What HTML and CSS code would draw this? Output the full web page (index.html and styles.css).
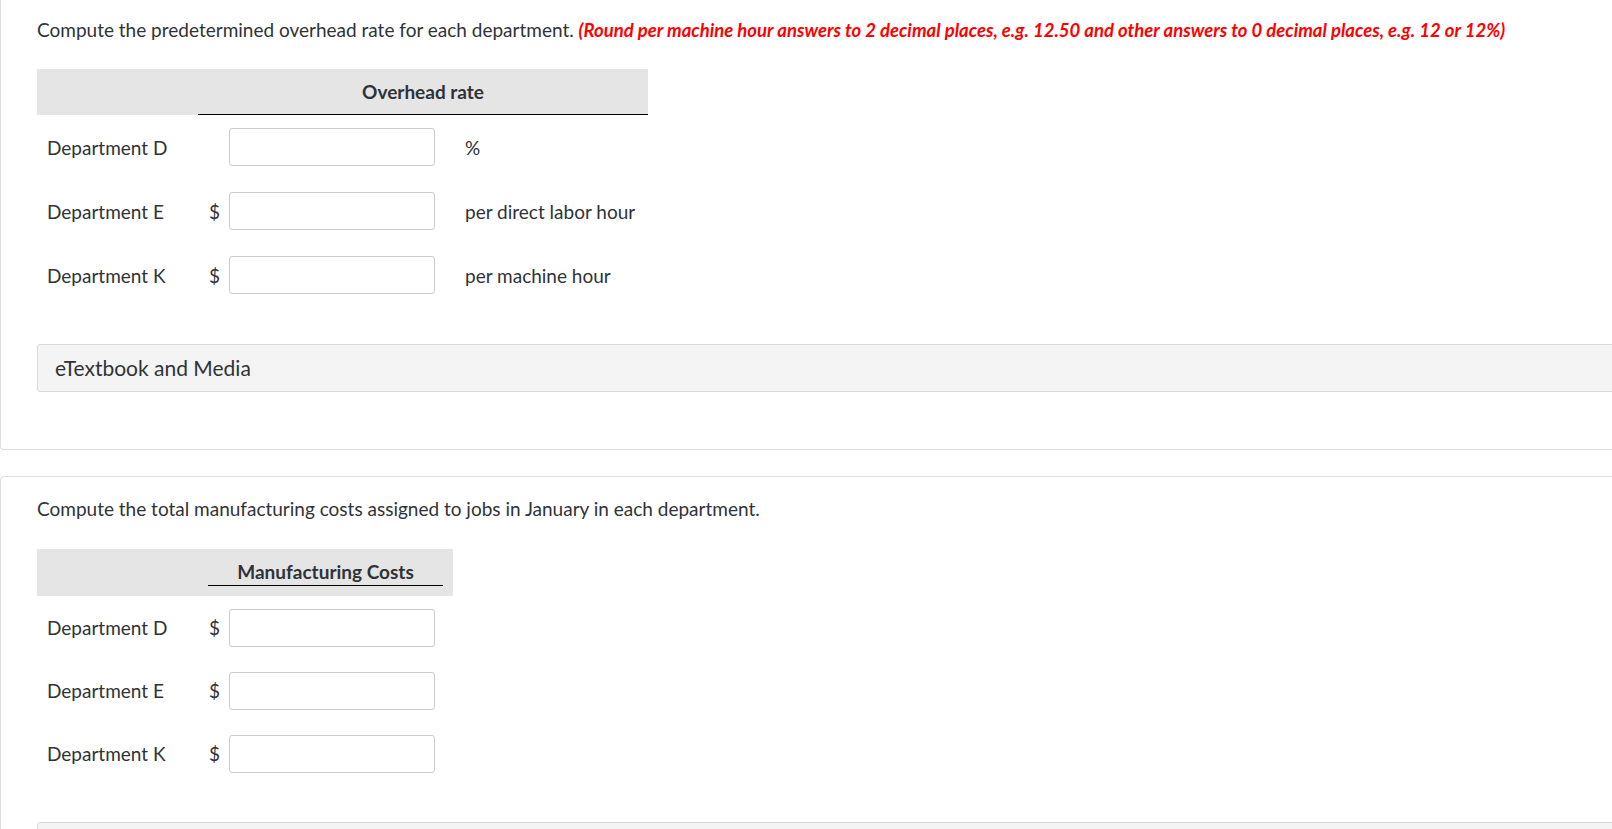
FILE: index.html
```html
<!DOCTYPE html>
<html lang="en">
<head>
  <meta charset="UTF-8" />
  <meta name="viewport" content="width=device-width, initial-scale=1.0" />
  <title>Overhead rates</title>
  <link rel="stylesheet" href="styles.css">
</head>
<body>
  <div class="card card-first">
    <p class="question">Compute the predetermined overhead rate for each department. <span class="hint">(Round per machine hour answers to 2 decimal places, e.g. 12.50 and other answers to 0 decimal places, e.g. 12 or 12%)</span></p>

    <table class="answer-table rates">
      <thead>
        <tr>
          <th class="col-label"></th>
          <th class="col-head" colspan="3"><div class="head-text">Overhead rate</div></th>
        </tr>
      </thead>
      <tbody>
        <tr>
          <td class="col-label">Department D</td>
          <td class="col-cur"></td>
          <td class="col-field"><input type="text" /></td>
          <td class="col-unit">%</td>
        </tr>
        <tr>
          <td class="col-label">Department E</td>
          <td class="col-cur">$</td>
          <td class="col-field"><input type="text" /></td>
          <td class="col-unit">per direct labor hour</td>
        </tr>
        <tr>
          <td class="col-label">Department K</td>
          <td class="col-cur">$</td>
          <td class="col-field"><input type="text" /></td>
          <td class="col-unit">per machine hour</td>
        </tr>
      </tbody>
    </table>

    <div class="media-box">eTextbook and Media</div>
  </div>

  <div class="card card-second">
    <p class="question">Compute the total manufacturing costs assigned to jobs in January in each department.</p>

    <table class="answer-table costs">
      <thead>
        <tr>
          <th class="col-label"></th>
          <th class="col-head" colspan="3"><div class="head-text">Manufacturing Costs</div></th>
        </tr>
      </thead>
      <tbody>
        <tr>
          <td class="col-label">Department D</td>
          <td class="col-cur">$</td>
          <td class="col-field"><input type="text" /></td>
          <td class="col-pad"></td>
        </tr>
        <tr>
          <td class="col-label">Department E</td>
          <td class="col-cur">$</td>
          <td class="col-field"><input type="text" /></td>
          <td class="col-pad"></td>
        </tr>
        <tr>
          <td class="col-label">Department K</td>
          <td class="col-cur">$</td>
          <td class="col-field"><input type="text" /></td>
          <td class="col-pad"></td>
        </tr>
      </tbody>
    </table>

    <div class="media-box"></div>
  </div>
</body>
</html>
```

FILE: styles.css
```css
body {
  margin: 0;
  background-color: #fff;
  color: #2f3337;
  font-family: Lato, "Open Sans", sans-serif;
  font-size: 19px;
  overflow: hidden;
}

/* question cards run wider than the window */
.card {
  border: 1px solid #ddd;
  border-radius: 4px;
  margin-right: -50px;
  padding: 16px 36px 0 36px;
}

.card-first {
  border-top: 0;
  border-radius: 0 0 4px 4px;
  padding-bottom: 57px;
}

.card-second {
  margin-top: 26px;
  padding-top: 18px;
}

.question {
  margin: 0;
  line-height: 27px;
}

.hint {
  color: #f00;
  font-weight: bold;
  font-style: italic;
  font-size: 18.5px;
}

.answer-table {
  border-collapse: collapse;
  border-spacing: 0;
  margin-top: 25px;
}

.answer-table.costs {
  margin-top: 27px;
}

.answer-table thead tr {
  background-color: #e5e5e5;
}

.answer-table th {
  padding: 0;
  font-weight: bold;
}

.head-text {
  text-align: center;
  border-bottom: 1px solid #000;
}

.rates .head-text {
  line-height: 45px;
}

.costs .col-head {
  padding: 0 10px 10px 10px;
}

.costs .head-text {
  line-height: 26px;
  padding-top: 10px;
}

.col-label {
  width: 150px;
  padding-left: 10px;
  text-align: left;
}

.col-cur {
  width: 19px;
  padding-left: 11px;
}

.col-field {
  width: 206px;
  height: 64px;
  padding: 0;
}

.costs .col-field {
  height: 63px;
}

.col-unit {
  width: 182px;
  padding-left: 30px;
}

.col-pad {
  width: 16px;
}

.answer-table input {
  display: block;
  box-sizing: border-box;
  width: 206px;
  height: 38px;
  margin: 0;
  border: 1px solid #ccc;
  border-radius: 3px;
  background-color: #fff;
  font: inherit;
}

.media-box {
  margin-top: 37px;
  height: 46px;
  line-height: 46px;
  padding-left: 17px;
  border: 1px solid #d9d9d9;
  border-radius: 3px;
  background-color: #f4f4f4;
  font-size: 21px;
}
```
